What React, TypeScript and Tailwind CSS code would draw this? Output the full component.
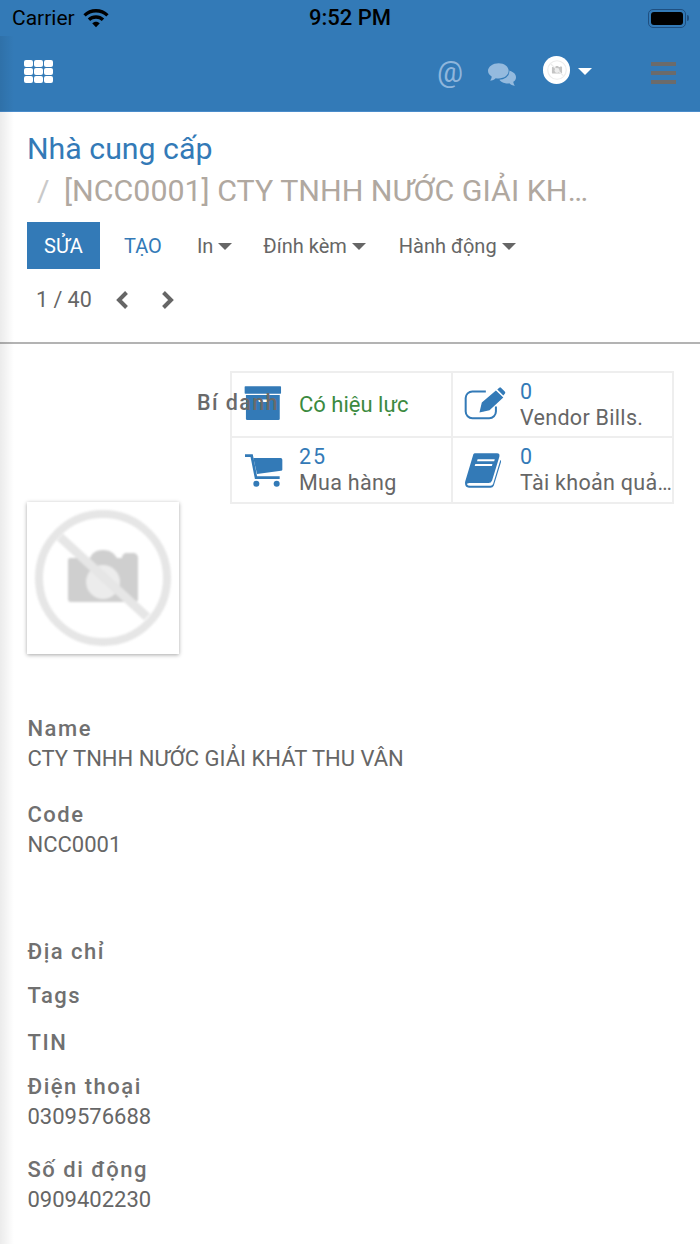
function Caret({ className }: { className?: string }) {
  return (
    <svg width="14" height="7" viewBox="0 0 14 7" className={className} aria-hidden="true">
      <path d="M0 0h14L7 7z" fill="currentColor" />
    </svg>
  );
}

function Chevron({ d, className }: { d: string; className?: string }) {
  return (
    <svg width="14" height="18" viewBox="0 0 14 18" className={className} aria-hidden="true">
      <path d={d} fill="none" stroke="currentColor" strokeWidth="4" />
    </svg>
  );
}

function NoPhoto({ size, camera = "#cfcfcf", ring = "#e6e6e6", className }: { size: number; camera?: string; ring?: string; className?: string }) {
  return (
    <svg width={size} height={size} viewBox="0 0 152 152" className={className} aria-hidden="true">
      <path
        d="M43 56h20c2-5 6-8 13-8s11 3 14 8h5c0-3 2-5 5-5h6c3 0 5 2 5 5v41a3 3 0 0 1-3 3H44a3 3 0 0 1-3-3V58a2 2 0 0 1 2-2z"
        fill={camera}
      />
      <circle cx="76" cy="80" r="17" fill="#ececec" />
      <circle cx="76" cy="76" r="64" fill="none" stroke={ring} strokeWidth="8" />
      <path d="M33 35l87 80" stroke={ring} strokeWidth="9" />
    </svg>
  );
}

function ArchiveIcon() {
  return (
    <svg width="38" height="36" viewBox="160 75 118 108" fill="currentColor" className="mt-[-3px]" aria-hidden="true">
      <rect x="162" y="77" width="113" height="23" rx="2" />
      <path d="M166 104h105v74a4 4 0 0 1-4 4h-97a4 4 0 0 1-4-4z" />
      <rect x="205" y="118" width="28" height="8" rx="3" fill="#ffffff" />
    </svg>
  );
}

function EditIcon() {
  return (
    <svg width="42" height="33" viewBox="820 80 125 98" fill="currentColor" className="ml-[-1px] mt-[-3px]" aria-hidden="true">
      <path
        d="M885 93h-40a20 20 0 0 0-20 20v40a20 20 0 0 0 20 20h50a20 20 0 0 0 20-20v-15"
        fill="none"
        stroke="currentColor"
        strokeWidth="6"
      />
      <path d="M866 156l7-30 42-36 22 21-41 38zM872 145l8 8-11 2z" />
      <path d="M919 87l6-5q3-2 5 0l12 12q2 3 0 5l-5 6z" />
    </svg>
  );
}

function CartIcon() {
  return (
    <svg width="40" height="34" viewBox="160 285 120 102" fill="currentColor" className="mt-[2px]" aria-hidden="true">
      <path d="M163 290h20l13 66h71" fill="none" stroke="currentColor" strokeWidth="8" />
      <path d="M188 297h82q5 0 5 5v30q0 3-4 3l-72 10z" />
      <circle cx="197" cy="374" r="9" />
      <circle cx="258" cy="374" r="9" />
    </svg>
  );
}

function BookIcon() {
  return (
    <svg width="39" height="35" viewBox="824 277 118 106" fill="currentColor" aria-hidden="true">
      <path d="M853 278h68q9 0 7 10l-22 72q-3 8-11 8h-58q-9 0-6 5 1 3 8 3h62q6 0 8-5l22-73q3 1 2 6l-22 72q-3 6-10 6h-65q-12 0-12-14 0-3 1-6l22-74q2-10 6-10z" />
      <rect x="861" y="296" width="52" height="6" fill="#ffffff" transform="skewX(-16) translate(86 0)" />
      <rect x="856" y="310" width="52" height="6" fill="#ffffff" transform="skewX(-16) translate(88 0)" />
    </svg>
  );
}

function CommentsIcon() {
  return (
    <svg width="28" height="23" viewBox="0 0 84 68" aria-hidden="true">
      <path d="M58 22c14 1 26 9 26 20 0 6-3 11-8 14 0 4 2 9 5 12-7-1-13-4-17-8-4 1-8 1-12 0-8-1-14-5-18-10z" fill="#94bade" />
      <ellipse cx="32" cy="25" rx="32" ry="25" fill="#337ab7" />
      <path d="M32 0c17 0 30 10 30 23S49 46 32 46c-3 0-6 0-9-1-4 4-10 7-17 7 3-3 5-7 5-12C4 36 0 30 0 23 0 10 15 0 32 0z" fill="#94bade" />
    </svg>
  );
}

function StatusBar() {
  return (
    <div className="relative flex h-[36px] items-center justify-between pl-[12px] pr-[11px] text-black">
      <div className="flex items-center gap-[8px]">
        <span className="text-[21px] leading-none">Carrier</span>
        <svg width="26" height="19" viewBox="0 0 26 19" aria-hidden="true">
          <path
            d="M13 0c4.8 0 9.3 1.9 12.6 5.2l-2.3 2.4A14.6 14.6 0 0 0 13 3.4 14.6 14.6 0 0 0 2.700 7.600L.4 5.200A17.800 17.800 0 0 1 13 0zm0 6.300c3.100 0 6 1.200 8.200 3.300l-2.400 2.400A8.300 8.300 0 0 0 13 9.700c-2.200 0-4.300.8-5.800 2.300L4.800 9.600A11.700 11.700 0 0 1 13 6.300zm0 6.400c1.400 0 2.800.6 3.800 1.500L13 18.300l-3.800-4.100c1-.9 2.400-1.500 3.800-1.500z"
            fill="currentColor"
          />
        </svg>
      </div>
      <span className="absolute left-[309px] text-[22px] font-medium leading-none">9:52 PM</span>
      <div className="flex items-center">
        <div className="flex h-[19px] w-[38px] items-center justify-center rounded-[5px] border border-[#1f4f80]">
          <div className="h-[13px] w-[32px] rounded-[3px] bg-black" />
        </div>
        <div className="ml-[1px] h-[6px] w-[2px] rounded-r bg-[#1f4f80]" />
      </div>
    </div>
  );
}

function NavBar() {
  return (
    <div className="flex h-[76px] items-start border-b border-[#4a8ccb] pt-[24px]">
      <div className="ml-[24px] grid grid-cols-3 gap-[1px]">
        {Array.from({ length: 9 }).map((_, i) => (
          <div key={i} className="h-[7px] w-[9px] rounded-[2px] bg-white" />
        ))}
      </div>
      <span className="ml-[384px] mt-[-3px] text-[29px] leading-[30px] text-[#8fb6dc]">@</span>
      <div className="ml-[25px] mt-[3px]">
        <CommentsIcon />
      </div>
      <div className="ml-[27px] mt-[-4px] flex h-[28px] w-[27px] items-center justify-center rounded-full bg-white">
        <NoPhoto size={22} camera="#c4c4c4" ring="#ececec" />
      </div>
      <Caret className="ml-[8px] mt-[8px] text-white" />
      <div className="ml-[59px] mt-[2px] flex flex-col gap-[5px]">
        <div className="h-[4px] w-[25px] bg-[#6b6b6b]" />
        <div className="h-[4px] w-[25px] bg-[#6b6b6b]" />
        <div className="h-[4px] w-[25px] bg-[#6b6b6b]" />
      </div>
    </div>
  );
}

function ControlPanel() {
  return (
    <div className="h-[232px] border-b-2 border-[#b3b3b3] pl-[28px]">
      <div className="ml-[-1px] pt-[18px] text-[30.300px] leading-[38px] text-[#337ab7]">Nhà cung cấp</div>
      <div className="mt-[4px] flex text-[30.400px] leading-[38px]">
        <span className="ml-[9px] w-[27px] text-[#c9c9c9]">/</span>
        <span className="w-[526px] truncate text-[#b0a8a0]">[NCC0001] CTY TNHH NƯỚC GIẢI KHÁT THU VÂN</span>
      </div>
      <div className="mt-[12px] flex h-[47px] items-center text-[20px] text-[#666666]">
        <button type="button" className="ml-[-1px] flex h-[47px] w-[73px] items-center justify-center bg-[#337ab7] text-white">
          SỬA
        </button>
        <span className="ml-[24px] text-[#337ab7]">TẠO</span>
        <span className="ml-[35px]">In</span>
        <Caret className="ml-[5px] mt-[2px]" />
        <span className="ml-[31px]">Đính kèm</span>
        <Caret className="ml-[5px] mt-[2px]" />
        <span className="ml-[33px]">Hành động</span>
        <Caret className="ml-[5px] mt-[2px]" />
      </div>
      <div className="mt-[16px] flex h-[30px] items-center text-[#666666]">
        <span className="ml-[8px] text-[21.500px]">1 / 40</span>
        <Chevron d="M11.500 1.500L4 9l7.500 7.500" className="ml-[23px]" />
        <Chevron d="M2.500 1.500L10 9l-7.500 7.500" className="ml-[32px]" />
      </div>
    </div>
  );
}

function StatButton({
  icon,
  value,
  label,
  className,
}: {
  icon: React.ReactNode;
  value?: string;
  label: string;
  className?: string;
}) {
  return (
    <div className={"flex items-center pl-[12px] " + (className ?? "")}>
      <div className="flex w-[55px] shrink-0 items-center text-[#337ab7]">{icon}</div>
      {value ? (
        <div className="min-w-0 text-[21.500px] leading-[26px] tracking-[0.3px] text-[#666666]">
          <div className="text-[#337ab7] tracking-[2px]">{value}</div>
          <div className="w-[152px] truncate">{label}</div>
        </div>
      ) : (
        <div className="mb-[1px] text-[22px] text-[#3c8a3f]">{label}</div>
      )}
    </div>
  );
}

function StatBox() {
  return (
    <div className="relative mt-[27px] flex justify-end pr-[26px]">
      <div className="grid w-[444px] grid-cols-[221px_1fr] grid-rows-[65px_64px] border-2 border-[#eeeeee]">
        <StatButton icon={<ArchiveIcon />} label="Có hiệu lực" className="border-b-2 border-r-2 border-[#eeeeee]" />
        <StatButton icon={<EditIcon />} value="0" label="Vendor Bills." className="border-b-2 border-[#eeeeee]" />
        <StatButton icon={<CartIcon />} value="25" label="Mua hàng" className="border-r-2 border-[#eeeeee]" />
        <StatButton icon={<BookIcon />} value="0" label="Tài khoản quản lý" />
      </div>
      <span className="absolute left-[197px] top-[18px] text-[21.500px] font-medium leading-[28px] tracking-[1.400px] text-[#6a6a6a]">
        Bí danh
      </span>
    </div>
  );
}

function Field({ label, value, className }: { label: string; value?: string; className?: string }) {
  return (
    <div className={className}>
      <div className="text-[22px] font-medium leading-[30px] tracking-[1.500px] text-[#707070]">{label}</div>
      {value && <div className="text-[22px] leading-[30px] text-[#666666]">{value}</div>}
    </div>
  );
}

export default function App() {
  return (
    <div className="relative h-[1244px] w-[700px] overflow-hidden bg-white font-['Roboto',sans-serif]">
      <div className="bg-[#337ab7]">
        <StatusBar />
        <NavBar />
      </div>
      <ControlPanel />
      <StatBox />
      <div className="ml-[27px] mt-[-2px] h-[152px] w-[152px] bg-white shadow-[0_1px_4px_rgba(0,0,0,0.35)]">
        <NoPhoto size={152} className="blur-[1px]" />
      </div>
      <div className="pl-[27.500px]">
        <Field label="Name" value="CTY TNHH NƯỚC GIẢI KHÁT THU VÂN" className="mt-[60px]" />
        <Field label="Code" value="NCC0001" className="mt-[26px]" />
        <Field label="Địa chỉ" className="mt-[77px]" />
        <Field label="Tags" className="mt-[14px]" />
        <Field label="TIN" className="mt-[17px]" />
        <Field label="Điện thoại" value="0309576688" className="mt-[14px]" />
        <Field label="Số di động" value="0909402230" className="mt-[23px]" />
        <Field label="Fax" className="mt-[23px]" />
      </div>
      <div className="absolute bottom-0 left-0 top-[36px] w-[14px] bg-gradient-to-r from-[#00000014] to-transparent" />
    </div>
  );
}
